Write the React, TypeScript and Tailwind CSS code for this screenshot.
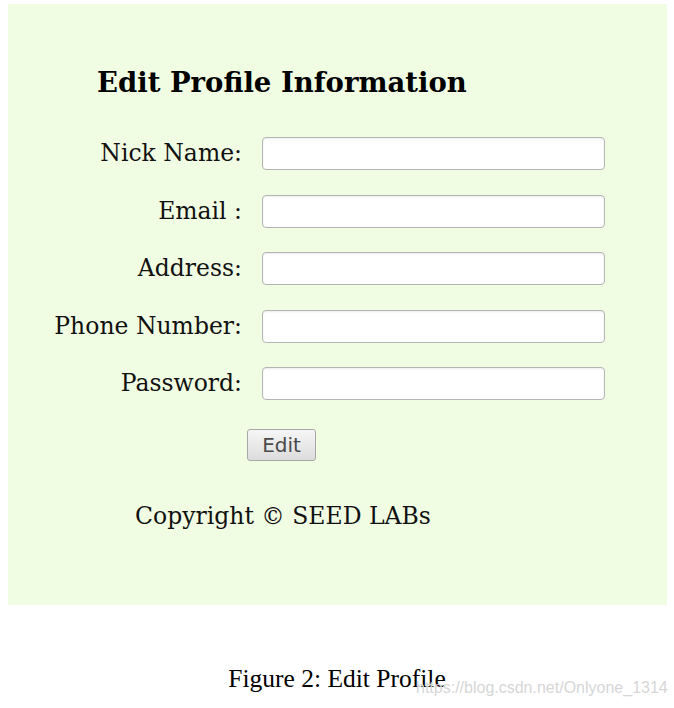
import React from 'react';

const fields = ['Nick Name:', 'Email :', 'Address:', 'Phone Number:', 'Password:'];

const App: React.FC = () => {
  return (
    <div className="w-[674px] h-[708px] bg-white relative overflow-hidden">
      {/* Form panel */}
      <div className="ml-[8px] pt-[4px] w-[659px]">
        <div className="h-[601px] bg-[#f1fde3] flex flex-col" style={{ fontFamily: '"DejaVu Serif", serif' }}>
          <h2 className="ml-[89px] mt-[60px] text-[27.5px] leading-[36px] font-bold text-black">
            Edit Profile Information
          </h2>

          <div className="mt-[37px] flex flex-col gap-[24.5px]">
            {fields.map(label => (
              <div key={label} className="flex items-center gap-[20px]">
                <label className="w-[234px] text-right text-[23.5px] leading-[33px] text-[#111]">{label}</label>
                <input
                  type="text"
                  className="w-[343px] h-[33px] bg-white border border-[#b4b4b4] rounded-[4px] shadow-[inset_0_1px_2px_rgba(0,0,0,0.08)]"
                />
              </div>
            ))}
          </div>

          <button
            className="ml-[239px] mt-[29px] w-[69px] h-[32px] rounded-[3px] border border-[#a8a8a8] bg-gradient-to-b from-[#f6f6f6] to-[#dcdcdc] text-[20px] leading-[30px] text-[#4a4a4a]"
            style={{ fontFamily: '"DejaVu Sans", sans-serif' }}
          >
            Edit
          </button>

          <p className="ml-[127px] mt-[39px] text-[23.5px] leading-[32px] text-[#111]">
            Copyright © SEED LABs
          </p>
        </div>
      </div>

      {/* Caption */}
      <p
        className="mt-[59px] text-center text-[25.5px] leading-[30px] text-black"
        style={{ fontFamily: '"Liberation Serif", serif' }}
      >
        Figure 2: Edit Profile
      </p>

      {/* Watermark */}
      <span
        className="absolute left-[416px] top-[678px] text-[16px] leading-[20px] text-[#d6d6d6]"
        style={{ fontFamily: '"Liberation Sans", sans-serif' }}
      >
        https://blog.csdn.net/Onlyone_1314
      </span>
    </div>
  );
};

export default App;
